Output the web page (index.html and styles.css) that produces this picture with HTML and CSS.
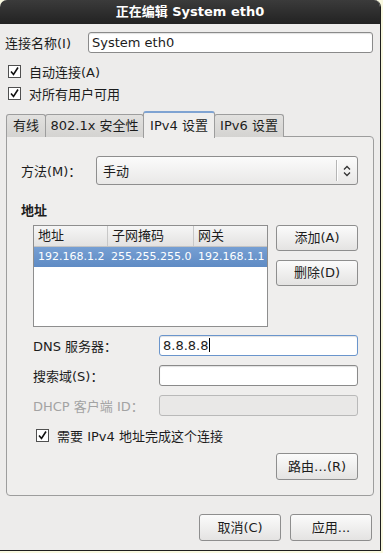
FILE: index.html
```html
<!DOCTYPE html>
<html lang="zh-CN">
<head>
  <meta charset="UTF-8">
  <title>正在编辑 System eth0</title>
  <link rel="stylesheet" href="styles.css">
</head>
<body>
  <div class="window">
    <div class="titlebar">正在编辑 System eth0</div>

    <div class="content">
      <div class="name-row">
        <label class="name-label">连接名称(I)</label>
        <div class="entry name-entry">System eth0</div>
      </div>

      <div class="check-row first">
        <svg class="check" viewBox="0 0 13 13"><rect x="0.5" y="0.5" width="12" height="12" fill="#fff" stroke="#505050"/><path d="M3 6.5 L5.5 9.5 L10 2.5" fill="none" stroke="#111" stroke-width="1.6"/></svg>
        <span>自动连接(A)</span>
      </div>
      <div class="check-row">
        <svg class="check" viewBox="0 0 13 13"><rect x="0.5" y="0.5" width="12" height="12" fill="#fff" stroke="#505050"/><path d="M3 6.5 L5.5 9.5 L10 2.5" fill="none" stroke="#111" stroke-width="1.6"/></svg>
        <span>对所有用户可用</span>
      </div>

      <!-- 标签页 -->
      <div class="tabs">
        <div class="tab tab-wired">有线</div>
        <div class="tab tab-sec">802.1x 安全性</div>
        <div class="tab tab-v4 active">IPv4 设置</div>
        <div class="tab tab-v6">IPv6 设置</div>
      </div>

      <div class="panel">
        <div class="method-row">
          <label class="method-label">方法(M)：</label>
          <div class="combo">
            <span class="combo-text">手动</span>
            <span class="combo-sep"></span>
            <svg class="combo-arrows" viewBox="0 0 8 12"><path d="M1 4.5 L4 1.5 L7 4.5 M1 7.5 L4 10.5 L7 7.5" fill="none" stroke="#333" stroke-width="1.3"/></svg>
          </div>
        </div>

        <div class="section-title">地址</div>

        <div class="addr-block">
          <div class="addr-table">
            <div class="addr-head">
              <div class="col c1">地址</div>
              <div class="col c2">子网掩码</div>
              <div class="col c3">网关</div>
            </div>
            <div class="addr-row selected">
              <div class="col c1">192.168.1.2</div>
              <div class="col c2">255.255.255.0</div>
              <div class="col c3">192.168.1.1</div>
            </div>
          </div>
          <div class="addr-buttons">
            <div class="button">添加(A)</div>
            <div class="button">删除(D)</div>
          </div>
        </div>

        <div class="field-row">
          <label class="field-label">DNS 服务器：</label>
          <div class="entry focused">8.8.8.8<span class="caret"></span></div>
        </div>
        <div class="field-row">
          <label class="field-label">搜索域(S)：</label>
          <div class="entry"></div>
        </div>
        <div class="field-row disabled">
          <label class="field-label">DHCP 客户端 ID：</label>
          <div class="entry"></div>
        </div>

        <div class="check-row require">
          <svg class="check" viewBox="0 0 13 13"><rect x="0.5" y="0.5" width="12" height="12" fill="#fff" stroke="#505050"/><path d="M3 6.5 L5.5 9.5 L10 2.5" fill="none" stroke="#111" stroke-width="1.6"/></svg>
          <span>需要 IPv4 地址完成这个连接</span>
        </div>

        <div class="route-row">
          <div class="button">路由…(R)</div>
        </div>
      </div>

      <div class="dialog-buttons">
        <div class="button">取消(C)</div>
        <div class="button">应用...</div>
      </div>
    </div>
  </div>
</body>
</html>
```

FILE: styles.css
```css
body {
  margin: 0;
  padding: 0;
  background-color: #f9f9e0;
  font-family: "DejaVu Sans", "Noto Sans CJK SC", sans-serif;
  font-size: 13px;
  color: #1c1c1c;
}

.window {
  width: 380px;
  height: 550px;
  background-color: #edeceb;
  border-right: 1px solid #1e1e1e;
  border-bottom: 1px solid #1e1e1e;
  border-radius: 7px 7px 0 0;
  overflow: hidden;
}

.titlebar {
  height: 24px;
  line-height: 24px;
  background: linear-gradient(#3b3b3b, #222);
  color: #fff;
  font-weight: bold;
  text-align: center;
  font-size: 13px;
}

.content {
  padding: 0 6px 0 5px;
}

.name-row {
  display: flex;
  align-items: center;
  margin-top: 8px;
  margin-right: 1px;
  height: 21px;
}

.name-label {
  width: 83px;
}

.entry {
  flex: 1;
  height: 21px;
  box-sizing: border-box;
  line-height: 19px;
  padding: 0 3px;
  background-color: #fff;
  border: 1px solid #8a8a8a;
  border-radius: 3px;
  box-shadow: inset 0 1px 1px rgba(0, 0, 0, 0.12);
  white-space: nowrap;
}

.entry.focused {
  border-color: #6a95cc;
}

.caret {
  display: inline-block;
  width: 1px;
  height: 14px;
  background: #000;
  vertical-align: -2px;
  margin-left: 1px;
}

.check-row {
  display: flex;
  align-items: center;
  height: 22px;
}

.check-row .check {
  width: 13px;
  height: 13px;
  margin: 0 8px 0 3px;
}

.check-row.first {
  margin-top: 7px;
}

.tabs {
  display: flex;
  align-items: flex-end;
  height: 26px;
  margin-top: 7px;
  margin-left: 1px;
  position: relative;
  z-index: 2;
}

.tab {
  height: 23px;
  box-sizing: border-box;
  line-height: 22px;
  text-align: center;
  background: linear-gradient(#e2e1df, #d4d3d1);
  border: 1px solid #9d9d9d;
  border-bottom: none;
  border-radius: 3px 3px 0 0;
  margin-right: -1px;
}

.tab-wired { width: 40px; }
.tab-sec { width: 99px; }
.tab-v4 { width: 72px; }
.tab-v6 { width: 70px; }

.tab.active {
  height: 27px;
  line-height: 25px;
  background: #efeeed;
  border-top: 2px solid #7fa3d2;
  position: relative;
  z-index: 3;
  margin-bottom: -1px;
}

.panel {
  margin-left: 1px;
  margin-top: -1px;
  height: 360px;
  box-sizing: border-box;
  border: 1px solid #9d9d9d;
  border-radius: 0 4px 4px 4px;
  background-color: #efeeed;
  padding: 19px 15px 0 14px;
  position: relative;
  z-index: 1;
}

.method-row {
  display: flex;
  align-items: center;
}

.method-label {
  width: 75px;
}

.combo {
  flex: 1;
  height: 29px;
  box-sizing: border-box;
  display: flex;
  align-items: center;
  border: 1px solid #8e8e8e;
  border-radius: 3px;
  background: linear-gradient(#fbfbfb, #e9e8e7);
}

.combo-text {
  flex: 1;
  padding-left: 6px;
}

.combo-sep {
  width: 1px;
  height: 21px;
  background: #b5b5b5;
  border-right: 1px solid #fff;
}

.combo-arrows {
  width: 8px;
  height: 12px;
  margin: 0 6px 0 5px;
}

.section-title {
  font-weight: bold;
  margin-top: 18px;
  height: 16px;
  line-height: 16px;
}

.addr-block {
  display: flex;
  gap: 8px;
  margin-top: 6px;
  margin-left: 12px;
}

.addr-table {
  width: 235px;
  height: 102px;
  box-sizing: border-box;
  border: 1px solid #8e8e8e;
  background: #fff;
}

.addr-head,
.addr-row {
  display: flex;
  height: 20px;
  line-height: 20px;
}

.addr-head {
  background: linear-gradient(#f6f6f6, #e3e2e1);
  border-bottom: 1px solid #c4c4c4;
}

.addr-head .col + .col {
  border-left: 1px solid #c8c8c8;
}

.col {
  box-sizing: border-box;
  padding-left: 4px;
  white-space: nowrap;
  overflow: hidden;
}

.c1 { width: 73px; }
.c2 { width: 86px; }
.c3 { flex: 1; }

.addr-row .col {
  font-size: 11px;
}

.addr-row .c2 {
  padding-left: 4px;
}

.addr-row .c3 {
  padding-left: 5px;
}

.addr-row.selected {
  background: linear-gradient(#769fd3, #5f8bc4);
  color: #fff;
}

.addr-buttons {
  display: flex;
  flex-direction: column;
  gap: 9px;
}

.button {
  width: 82px;
  height: 26px;
  box-sizing: border-box;
  line-height: 24px;
  text-align: center;
  border: 1px solid #8e8e8e;
  border-radius: 3px;
  background: linear-gradient(#fbfbfb, #e4e3e2);
}

.field-row {
  display: flex;
  align-items: center;
  margin-top: 9px;
  margin-left: 12px;
}

.addr-block + .field-row {
  margin-top: 8px;
}

.field-label {
  width: 126px;
}

.field-row.disabled .field-label {
  color: #a3a3a3;
}

.field-row.disabled .entry {
  background: #e9e8e7;
  border-color: #b9b9b9;
  box-shadow: none;
}

.check-row.require {
  margin-top: 11px;
  margin-left: 12px;
  height: 16px;
}

.route-row {
  display: flex;
  justify-content: flex-end;
  margin-top: 10px;
}

.route-row .button {
  height: 27px;
  line-height: 25px;
}

.dialog-buttons {
  display: flex;
  justify-content: flex-end;
  gap: 9px;
  margin-top: 18px;
  margin-right: 2px;
}

.dialog-buttons .button {
  height: 27px;
  line-height: 25px;
}
```
